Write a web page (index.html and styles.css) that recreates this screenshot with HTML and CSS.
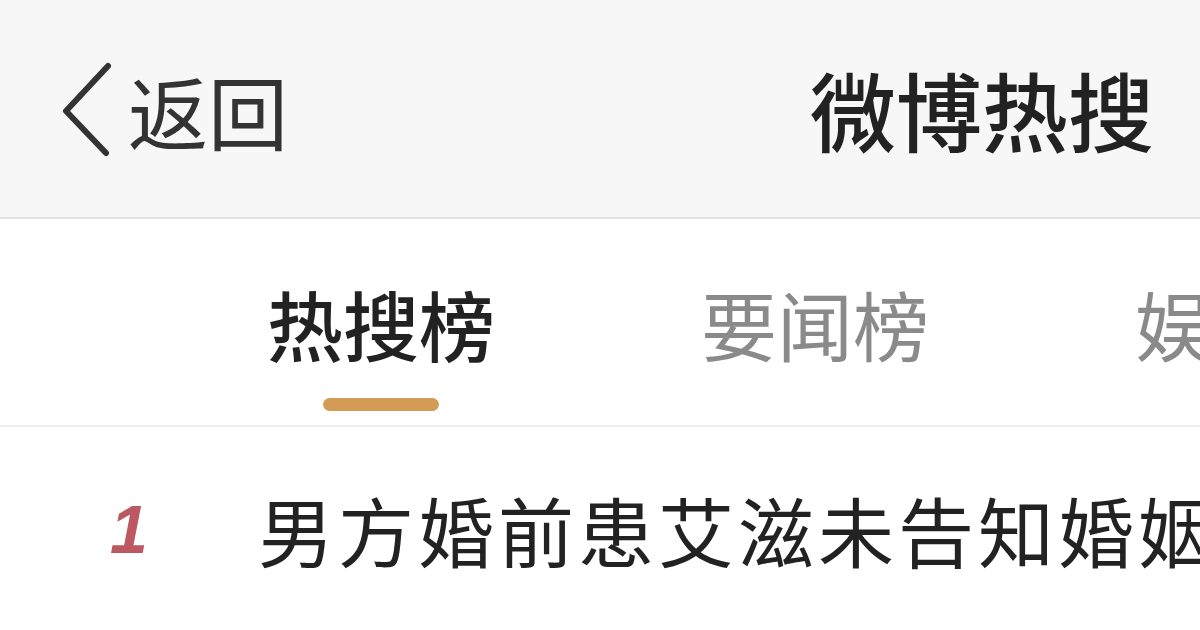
FILE: index.html
```html
<!DOCTYPE html>
<html lang="zh-CN">
<head>
  <meta charset="UTF-8">
  <title>微博热搜</title>
  <meta name="viewport" content="width=device-width, initial-scale=1.0"/>
  <link rel="stylesheet" href="styles.css">
</head>
<body>

<header class="topbar">
  <div class="back">
    <svg class="back-icon" width="56" height="96" viewBox="0 0 56 96">
      <path d="M50 5 L8 50 L48 92" fill="none" stroke="#333" stroke-width="6" stroke-linecap="round" stroke-linejoin="round"/>
    </svg>
    <span class="back-text">返回</span>
  </div>
  <div class="page-title">微博热搜</div>
</header>

<nav class="tabs">
  <div class="tab active">
    <span class="tab-name">热搜榜</span>
    <span class="tab-line"></span>
  </div>
  <div class="tab">
    <span class="tab-name">要闻榜</span>
    <span class="tab-line"></span>
  </div>
  <div class="tab">
    <span class="tab-name">娱乐榜</span>
    <span class="tab-line"></span>
  </div>
</nav>

<div class="list">
  <div class="item">
    <span class="rank">1</span>
    <span class="item-title">男方婚前患艾滋未告知婚姻</span>
  </div>
</div>

</body>
</html>
```

FILE: styles.css
```css
body {
  margin: 0;
  background: #fff;
  font-family: "Noto Sans CJK SC", "Noto Sans", sans-serif;
  color: #222;
  overflow: hidden;
}
.topbar {
  height: 217px;
  background: #f7f7f7;
  border-bottom: 2px solid #e2e2e2;
  display: flex;
  align-items: center;
  justify-content: space-between;
  padding: 0 46px 0 58px;
}
.back {
  display: flex;
  align-items: center;
}
.back-icon {
  display: block;
  margin-right: 14px;
}
.back-text {
  font-size: 80px;
  line-height: 1;
  color: #333;
}
.page-title {
  font-size: 86px;
  font-weight: 500;
  line-height: 1;
  color: #222;
}
.tabs {
  height: 206px;
  display: flex;
  padding-left: 164px;
  border-bottom: 2px solid #ececec;
  overflow: hidden;
}
.tab {
  width: 434px;
  flex-shrink: 0;
  display: flex;
  flex-direction: column;
  align-items: center;
  padding-top: 66px;
}
.tab-name {
  font-size: 76px;
  line-height: 1;
  color: #8a8a8a;
  white-space: nowrap;
}
.tab.active .tab-name {
  color: #222;
  font-weight: 500;
}
.tab-line {
  width: 116px;
  height: 13px;
  margin-top: 37px;
  border-radius: 7px;
}
.tab.active .tab-line {
  background: #d39b56;
}
.item {
  height: 204px;
  display: flex;
  align-items: center;
  padding-left: 110px;
  white-space: nowrap;
}
.rank {
  width: 148px;
  flex-shrink: 0;
  font-family: "Liberation Sans", sans-serif;
  font-size: 68px;
  font-weight: bold;
  font-style: italic;
  color: #bb5862;
}
.item-title {
  font-size: 76px;
  letter-spacing: 4px;
  line-height: 1;
  color: #222;
}
```
